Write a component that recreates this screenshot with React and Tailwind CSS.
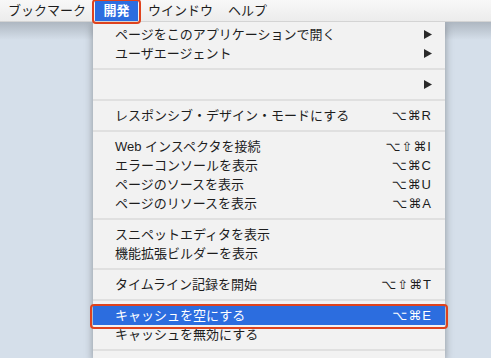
const jp = "font-['Liberation_Sans','Noto_Sans_CJK_JP',sans-serif]";
const keys = "font-['Liberation_Sans','DejaVu_Sans',sans-serif]";

const groups = [
  [
    { label: 'ページをこのアプリケーションで開く', arrow: true },
    { label: 'ユーザエージェント', arrow: true },
  ],
  [{ label: '', arrow: true }],
  [{ label: 'レスポンシブ・デザイン・モードにする', keys: '⌥⌘R' }],
  [
    { label: 'Web インスペクタを接続', keys: '⌥⇧⌘I' },
    { label: 'エラーコンソールを表示', keys: '⌥⌘C' },
    { label: 'ページのソースを表示', keys: '⌥⌘U' },
    { label: 'ページのリソースを表示', keys: '⌥⌘A' },
  ],
  [
    { label: 'スニペットエディタを表示' },
    { label: '機能拡張ビルダーを表示' },
  ],
  [{ label: 'タイムライン記録を開始', keys: '⌥⇧⌘T' }],
  [
    { label: 'キャッシュを空にする', keys: '⌥⌘E', active: true },
    { label: 'キャッシュを無効にする' },
  ],
  [],
];

function Arrow() {
  return (
    <svg width="8" height="9" viewBox="0 0 8 9">
      <polygon points="0,0 8,4.5 0,9" fill="#2a2a2a" />
    </svg>
  );
}

function MenuItem({ item }) {
  return (
    <div
      className={`relative flex h-[19px] items-center pl-[22px] pr-[13px] text-[13px] leading-[19px] ${
        item.active ? 'z-10 bg-[#2c6ddf] text-white' : 'text-[#1d1d1d]'
      }`}
    >
      <span className="flex-1 whitespace-nowrap">{item.label}</span>
      {item.arrow && <Arrow />}
      {item.keys && (
        <span className={`${keys} tracking-[1px] whitespace-nowrap`}>{item.keys}</span>
      )}
      {item.active && (
        <div className="absolute -top-[2px] -bottom-[4px] -left-[3px] -right-[3px] rounded-[4px] border-[2.5px] border-[#df421d]" />
      )}
    </div>
  );
}

export default function App() {
  return (
    <div className={`relative h-[358px] w-[491px] overflow-hidden bg-[#d5dfea] ${jp}`}>
      <header className="relative z-20 flex h-[22px] items-center border-b border-[#d4d4d4] bg-[linear-gradient(#f8f8f8,#ececec)] text-[13px] text-[#1d1d1d]">
        <span className="w-[95px] pl-[8px]">ブックマーク</span>
        <span className="relative flex h-[21px] w-[43px] items-center justify-center bg-[#2c6ddf] font-bold text-white">
          開発
          <span className="absolute -top-[1px] -bottom-[3px] -left-[3px] -right-[3px] rounded-[4px] border-[2.5px] border-[#df421d]" />
        </span>
        <span className="w-[90px] pl-[10px]">ウインドウ</span>
        <span>ヘルプ</span>
      </header>

      <div className="flex h-[336px] bg-[linear-gradient(to_bottom,#aeb7c1,#d5dfea_18px)]">
        <div className="w-[93px]" />
        <div className="w-[352px] bg-[#f2f2f2] pt-[3px] shadow-[0_3px_8px_rgba(0,0,0,0.35)]">
          {groups.map((group, index) => (
            <div key={index}>
              {group.map((item, i) => (
                <MenuItem item={item} key={i} />
              ))}
              {index < groups.length - 1 && (
                <div className="flex h-[12px] items-center">
                  <div className="h-[2px] w-full bg-[#e0e0e0]" />
                </div>
              )}
            </div>
          ))}
        </div>
      </div>
    </div>
  );
}
